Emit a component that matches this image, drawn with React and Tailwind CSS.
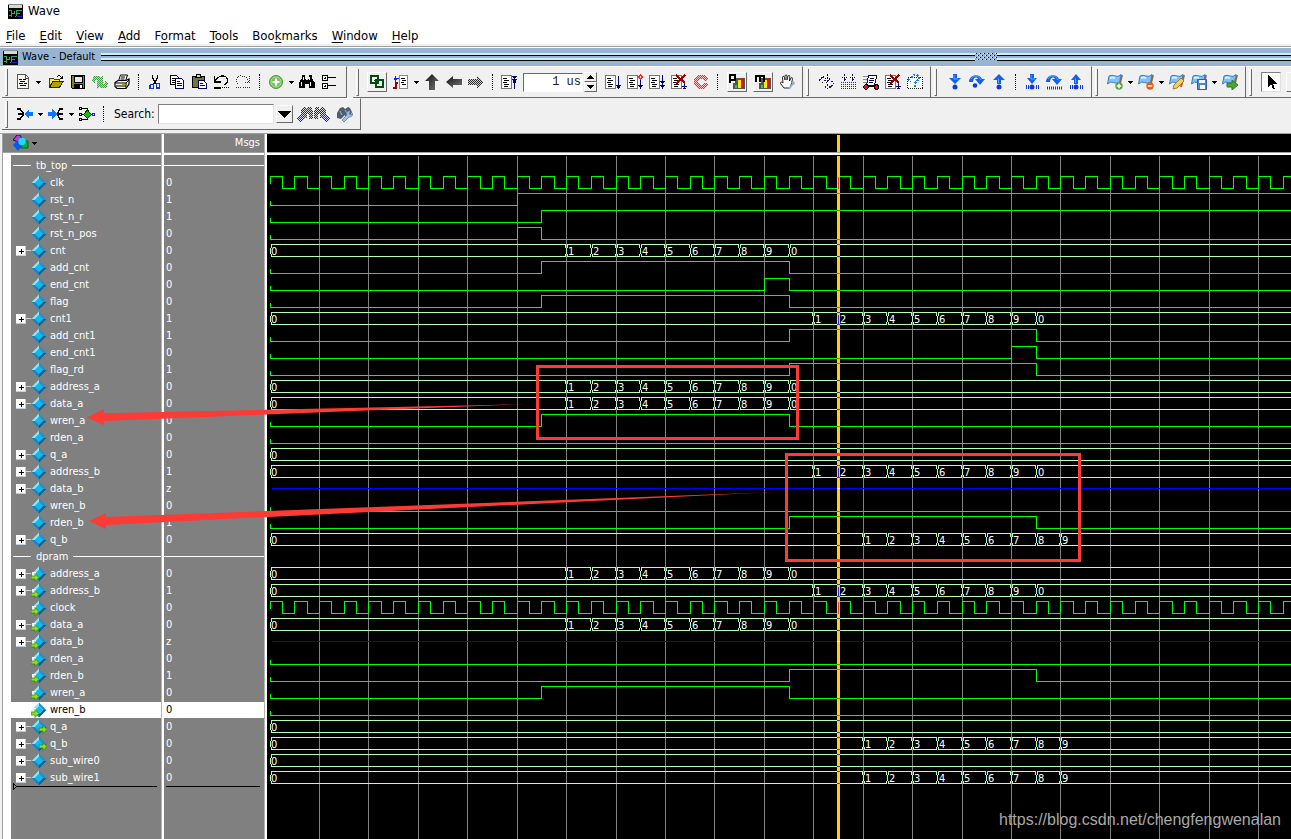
import React from "react";

const UI = "font-['DejaVu_Sans_Condensed','Noto_Sans',sans-serif]";

/* ---------- signal data ---------- */

const range = (from, labels) => [[0, "0"], ...labels.map((l, i) => [from + i, l])];
const UP = ["1", "2", "3", "4", "5", "6", "7", "8", "9"];
const WRITE = range(12, [...UP, "0"]);
const READ = range(22, [...UP, "0"]);
const OUT = range(24, UP);
const ZERO = [[0, "0"]];

const SIGNALS = [
  { name: "tb_top", kind: "group" },
  { name: "clk", value: "0", kind: "clock" },
  { name: "rst_n", value: "1", kind: "bit", edges: [10] },
  { name: "rst_n_r", value: "1", kind: "bit", edges: [11] },
  { name: "rst_n_pos", value: "0", kind: "bit", edges: [10, 11] },
  { name: "cnt", value: "0", kind: "bus", data: WRITE },
  { name: "add_cnt", value: "0", kind: "bit", edges: [11, 21] },
  { name: "end_cnt", value: "0", kind: "bit", edges: [20, 21] },
  { name: "flag", value: "0", kind: "bit", edges: [11, 21] },
  { name: "cnt1", value: "1", kind: "bus", data: READ },
  { name: "add_cnt1", value: "1", kind: "bit", edges: [21, 31] },
  { name: "end_cnt1", value: "0", kind: "bit", edges: [30, 31] },
  { name: "flag_rd", value: "1", kind: "bit", edges: [21, 31] },
  { name: "address_a", value: "0", kind: "bus", data: WRITE },
  { name: "data_a", value: "0", kind: "bus", data: WRITE },
  { name: "wren_a", value: "0", kind: "bit", edges: [11, 21] },
  { name: "rden_a", value: "0", kind: "bit", edges: [] },
  { name: "q_a", value: "0", kind: "bus", data: ZERO },
  { name: "address_b", value: "1", kind: "bus", data: READ },
  { name: "data_b", value: "z", kind: "hiz" },
  { name: "wren_b", value: "0", kind: "bit", edges: [] },
  { name: "rden_b", value: "1", kind: "bit", edges: [21, 31] },
  { name: "q_b", value: "0", kind: "bus", data: OUT },
  { name: "dpram", kind: "group" },
  { name: "address_a", value: "0", kind: "bus", data: WRITE, port: "in" },
  { name: "address_b", value: "1", kind: "bus", data: READ, port: "in" },
  { name: "clock", value: "0", kind: "clock", port: "in" },
  { name: "data_a", value: "0", kind: "bus", data: WRITE, port: "in" },
  { name: "data_b", value: "z", kind: "hiz", port: "in" },
  { name: "rden_a", value: "0", kind: "bit", edges: [], port: "in" },
  { name: "rden_b", value: "1", kind: "bit", edges: [21, 31], port: "in" },
  { name: "wren_a", value: "0", kind: "bit", edges: [11, 21], port: "in" },
  { name: "wren_b", value: "0", kind: "bit", edges: [], port: "in", selected: true },
  { name: "q_a", value: "0", kind: "bus", data: ZERO, port: "out" },
  { name: "q_b", value: "0", kind: "bus", data: OUT, port: "out" },
  { name: "sub_wire0", value: "0", kind: "bus", data: ZERO },
  { name: "sub_wire1", value: "0", kind: "bus", data: OUT },
];

/* ---------- wave chart ---------- */

const ROW = 17;
const TOP = 2;
const END = 4000;
const xAt = (k) => 3 + Math.floor(24.715 * k);

function bitPath(edges, y) {
  const hi = y + 2;
  const lo = y + 14;
  let d = `M3 ${y + 9}V${lo}`;
  edges.forEach((k, i) => {
    d += `H${xAt(k)}V${i % 2 === 0 ? hi : lo}`;
  });
  return d + `H${END}`;
}

function clockPath(y) {
  let d = `M3 ${y + 9}V${y + 2}`;
  for (let k = 0; k < 160; k++) {
    d += `H${xAt(k + 0.5)}V${y + 14}H${xAt(k + 1)}V${y + 2}`;
  }
  return d;
}

function busPath(data, y) {
  const a = y + 2;
  const b = y + 14;
  return data
    .map(([k], i) => {
      const x0 = xAt(k);
      const last = i === data.length - 1;
      const x1 = last ? END : xAt(data[i + 1][0]);
      return (
        `M${x1 - 1} ${a}H${x0 + 1}v3M${x0} ${a + 3}V${b - 3}M${x0 + 1} ${b - 3}v3H${x1 - 1}` +
        (last ? "" : `v-3M${x1 - 1} ${a}v3`)
      );
    })
    .join("");
}

function Waves() {
  const cx = 571;
  return (
    <svg className="absolute inset-0 h-full w-full" role="img" aria-label="Waveforms">
      <g transform="translate(0.5 0.5)" fill="none" shapeRendering="crispEdges">
        {Array.from({ length: 60 }, (_, i) => (
          <line key={i} x1={xAt(2 * i + 2)} x2={xAt(2 * i + 2)} y1="0" y2="3000" stroke="#808080" />
        ))}
        {SIGNALS.map((s, i) => {
          const y = TOP + i * ROW;
          if (s.kind === "bit") return <path key={i} d={bitPath(s.edges, y)} stroke="#00ff00" />;
          if (s.kind === "clock") return <path key={i} d={clockPath(y)} stroke="#00ff00" />;
          if (s.kind === "bus") return <path key={i} d={busPath(s.data, y)} stroke="#b4ffb4" />;
          if (s.kind === "hiz") return <path key={i} d={`M4 ${y + 8}H${END}`} stroke="#0000ff" />;
          return null;
        })}
      </g>
      <rect x="570" y="1" width="3" height="3000" fill="#ffd200" shapeRendering="crispEdges" />
      <g transform="translate(0 0.5)" strokeWidth="1" shapeRendering="crispEdges">
        {SIGNALS.map((s, i) => {
          const y = TOP + i * ROW;
          if (s.kind === "bit") {
            const high = s.edges.filter((k) => k <= 23).length % 2 === 1;
            return <path key={i} d={`M570 ${y + (high ? 2 : 14)}h3`} stroke="#ff3c14" />;
          }
          if (s.kind === "clock") return <path key={i} d={`M${cx + 0.5} ${y + 2}v12`} stroke="#ff3c14" />;
          if (s.kind === "bus")
            return (
              <path
                key={i}
                d={`M570 ${y + 2}h3M570 ${y + 14}h3` + (s.data === READ ? `M${cx + 0.5} ${y + 4}v9` : "")}
                stroke="#4b2dc8"
              />
            );
          if (s.kind === "hiz") return <path key={i} d={`M570 ${y + 8}h3`} stroke="#fff" />;
          return null;
        })}
      </g>
      <g className={`${UI} text-[11px]`} fill="#fff">
        {SIGNALS.map((s, i) =>
          s.kind === "bus"
            ? s.data.map(([k, label], j) => (
                <text key={`${i}-${j}`} x={xAt(k) + (k === 0 ? 1 : 2)} y={TOP + i * ROW + 13}>
                  {label}
                </text>
              ))
            : null
        )}
      </g>
    </svg>
  );
}

/* ---------- icons ---------- */

function Svg({ children, w = 16, h = 16, crisp = true }) {
  return (
    <svg
      width={w}
      height={h}
      viewBox={`0 0 ${w} ${h}`}
      fill="none"
      className="block shrink-0"
      shapeRendering={crisp ? "crispEdges" : "auto"}
      aria-hidden="true"
    >
      {children}
    </svg>
  );
}

function Patterns() {
  const colors = { k: "#303030", g: "#3f9a3f", r: "#ff2a1a", b: "#1a1aff", n: "#10106a" };
  return (
    <svg width="0" height="0" className="absolute" aria-hidden="true">
      <defs>
        {Object.entries(colors).map(([id, c]) => (
          <pattern key={id} id={`dots-${id}`} width="2" height="2" patternUnits="userSpaceOnUse">
            <path d="M0 0h1v1h-1zM1 1h1v1h-1z" fill={c} />
          </pattern>
        ))}
      </defs>
    </svg>
  );
}

const WaveLogo = () => (
  <Svg w={15} h={15}>
    <path d="M0 0h15v15H0z" fill="#000" />
    <path d="M1 1h13v3H1z" fill="#d8d8d8" />
    <path d="M0 .5h15" stroke="#888" />
    <path d="M1 6.500h2.500v3M3.500 12.500v-3h3v-3M1 11.500h1.500M6.500 12.500h1M8.500 12v-5.500h5M8.500 9.500h3" stroke="#1fae62" />
    <path d="M9 12.500h5" stroke="#2a18d8" />
  </Svg>
);

const DocNew = () => (
  <Svg>
    <path d="M2.500 .5h8l3 3v11h-11z" fill="#f4f4f0" stroke="#555" />
    <path d="M10.500 1v3h3" stroke="#555" />
    <path d="M4 5.500h3M8 5.500h3M5 7.500h5M4 9.500h4M9 9.500h3M5 11.500h6" stroke="#000" />
  </Svg>
);
const Open = () => (
  <Svg>
    <path d="M1 4h4l1 1h5v3H5l-4 5z" fill="#ffe84a" stroke="#4a4000" />
    <path d="M1.500 13.500l3.500-6h10l-3.500 6z" fill="#b0a000" stroke="#222" />
    <path d="M9 2.500q3-2 5 2M11.500 4.500h3V1.500" stroke="#000" />
  </Svg>
);
const Save = () => (
  <Svg>
    <path d="M1.500 1.500h13v13h-12l-1-1z" fill="#8a8300" stroke="#000" />
    <path d="M4 2h8v6H4z" fill="#e8e8e0" stroke="#000" />
    <path d="M4 10h9v5H4z" fill="#000" />
    <path d="M10 11h2v3h-2z" fill="#fff" />
  </Svg>
);
const REFRESH = "M0 7c0-5 5-7 9-4l2-2v7H4l2-2C4 5 2 6 3 9zM16 9c0 5-5 7-9 4l-2 2V8h7l-2 2c2 1 4 0 3-3z";
const Refresh = () => (
  <Svg>
    <path d={REFRESH} fill="#b4e2b4" />
    <path d={REFRESH} fill="url(#dots-g)" />
  </Svg>
);
const Print = () => (
  <Svg crisp={false}>
    <path d="M4.500 7l2-6h7l-2 6z" fill="#fff" stroke="#000" />
    <path d="M7 3h4M6.500 5h4" stroke="#000" />
    <path d="M1 8.500l3-2h8l3-1.500v5l-3 4.500H3l-2-2z" fill="#f0f0f0" stroke="#000" strokeWidth="1.200" />
    <path d="M1 9h11l3-3M2 12h10M12 9v5" stroke="#000" />
    <path d="M8 10.500h3" stroke="#b5a800" />
  </Svg>
);
const Cut = () => (
  <Svg>
    <path d="M5.500 1v3l4 6M10.500 1v3l-4 6" stroke="#000" strokeWidth="1.300" />
    <path d="M4 10.500h2.500v4H3v-3zM9.500 9.500h3v4.500h-3z" stroke="#1030d8" strokeWidth="1.200" />
  </Svg>
);
const Copy = () => (
  <Svg>
    <path d="M1.500 1.500h6l2 2v7h-8z" fill="#fff" stroke="#000" />
    <path d="M3 4.500h3M3 6.500h4M3 8.500h4" stroke="#000" />
    <path d="M6.500 4.500h6l2 2v8h-8z" fill="#fff" stroke="#000070" />
    <path d="M8 7.500h3M8 9.500h5M8 11.500h5" stroke="#000070" />
  </Svg>
);
const Paste = () => (
  <Svg>
    <path d="M1.500 2.500h12v11h-12z" fill="#77743a" stroke="#000" />
    <path d="M4.500 3.500h6v-1h-1v-2h-4v2h-1z" fill="#e6d860" stroke="#000" />
    <path d="M7.500 6.500h5l3 3v5h-8z" fill="#fff" stroke="#000070" />
    <path d="M9 9.500h3M9 11.500h5" stroke="#000070" />
  </Svg>
);
const Undo = () => (
  <Svg>
    <path d="M1.500 2v6h6M2 7.500C5 1 13 0 14.500 5.500c.5 2-1 4-3 5" stroke="#000" strokeWidth="1.200" />
    <path d="M1 13h7v2H1z" fill="#000" />
    <path d="M9 13.500h7" stroke="#000" strokeDasharray="1 1" />
  </Svg>
);
const Redo = () => (
  <Svg>
    <path d="M14.500 2v6h-6M14 7.500C11 1 3 0 1.500 5.500c-.5 2 1 4 3 5" stroke="#333" strokeDasharray="1 1" />
    <path d="M8 13.500h8M1 13.500h6" stroke="#333" strokeDasharray="1 1" />
  </Svg>
);
const AddGreen = () => (
  <Svg crisp={false}>
    <circle cx="8" cy="8" r="6.500" fill="#74c35a" stroke="#4c9440" />
    <circle cx="8" cy="8" r="5" stroke="#a7dc92" />
    <path d="M8 4.500v7M4.500 8h7" stroke="#fff" strokeWidth="2.200" />
  </Svg>
);
const BINO = "M3 4V1h3v3l1 2h2l1-2V1h3v3l3 5v5h-6v-4H6v4H0V9z";
const Find = () => (
  <Svg>
    <path d={BINO} fill="#000" />
    <path d="M2.500 8v4M11.500 8v4M4.500 3v3M10.500 3v3" stroke="#fff" />
  </Svg>
);
const Tree = () => (
  <Svg>
    <path d="M1.500 1.500h5v5h-5zM1.500 9.500h5v5h-5z" fill="#fff" stroke="#000" />
    <path d="M3 4.500h2M4 3v2M3 12.500h2M4 11v2M7 3.500h8M7 11.500h8" stroke="#000" />
  </Svg>
);
const Link = () => (
  <Svg>
    <path d="M2 2h7v7H2zM7 6h7v7H7z" stroke="#004c12" strokeWidth="2" />
    <path d="M6 6l4 4" stroke="#004c12" strokeWidth="2" />
  </Svg>
);
const WaveDoc = () => (
  <Svg>
    <path d="M6.500 1.500h8v13h-8z" fill="#fff" stroke="#888" />
    <path d="M8 4.500h4M9 6.500h4M8 8.500h3M9 10.500h4" stroke="#000" />
    <path d="M2.500 10V4.500h3M1 6l1.500-3L4 6" stroke="#1020ff" />
    <path d="M0 14h3V9h2" stroke="#9a0000" strokeWidth="2" />
  </Svg>
);
const Steel = () => (
  <defs>
    <linearGradient id="steel" x1="0" y1="0" x2="1" y2="1">
      <stop offset="0" stopColor="#111" />
      <stop offset="1" stopColor="#777" />
    </linearGradient>
  </defs>
);
const ArrowUp = () => (
  <Svg crisp={false}>
    <Steel />
    <path d="M8 0l7 7h-4v9H5V7H1z" fill="url(#steel)" />
  </Svg>
);
const ArrowLeft = () => (
  <Svg crisp={false}>
    <path d="M0 8l7-6v3h9v6H7v3z" fill="url(#steel)" />
  </Svg>
);
const ArrowRightDim = () => (
  <Svg>
    <path d="M16 8L9 2v3H0v6h9v3z" fill="#ccc" />
    <path d="M16 8L9 2v3H0v6h9v3z" fill="url(#dots-k)" />
  </Svg>
);
const ListDoc = ({ children }) => (
  <Svg>
    <path d="M.5 1.500h10v13H.5z" fill="#fff" stroke="#777" />
    <path d="M2 4.500h4M3 6.500h5M2 8.500h4M3 10.500h5M3 12.500h4" stroke="#000" />
    {children}
  </Svg>
);
const Restart = () => (
  <ListDoc>
    <path d="M13.500 15V4M11 5.500h5M12 3.500h3M11 2.500h5M12 8.500l1.500-3 1.500 3" stroke="#00007a" />
  </ListDoc>
);
const Run = () => (
  <ListDoc>
    <path d="M13.500 2v12M11 11.500h5M12 13.500h3" stroke="#00007a" />
    <path d="M11 11h5l-2.500 4z" fill="#00007a" />
  </ListDoc>
);
const RunCont = () => (
  <ListDoc>
    <path d="M13.500 1l2 2-2 2-2-2z" stroke="#f22" />
    <path d="M13.500 6v6" stroke="#00007a" />
    <path d="M11 11h5l-2.500 4z" fill="#00007a" />
  </ListDoc>
);
const RunAll = () => (
  <ListDoc>
    <path d="M13.500 1v12" stroke="#00007a" />
    <path d="M11 7h5l-2.500 3zM11 11h5l-2.500 4z" fill="#00007a" />
  </ListDoc>
);
const RunBreak = () => (
  <ListDoc>
    <path d="M13.500 8v7M11 12.500h5M12 14.500h3" stroke="#00007a" />
    <path d="M5 1l9 8M14 1l-9 9" stroke="#900" strokeWidth="2" />
  </ListDoc>
);
const STOP = "M5 1h6l4 4-1 2h-3l-2-2H7L5 7v2l2 2h2l2-2h3l1 2-4 4H5l-4-4V5z";
const Stop = () => (
  <Svg>
    <path d={STOP} fill="#f8c0bc" />
    <path d={STOP} fill="url(#dots-r)" />
  </Svg>
);
const Stats = ({ letter }) => (
  <Svg>
    <path d="M6 4h10v11H4V9h2z" fill="#555" />
    <path d="M6 11h2v3H6z" fill="#00e03a" />
    <path d="M9 6h3v8H9z" fill="#ffe600" />
    <path d="M12 4h3v10h-3z" fill="#e01010" />
    {letter === "P" ? (
      <path d="M1 9V1h5v5H2" stroke="#000" strokeWidth="2" />
    ) : (
      <path d="M1 8V2h8v6M5 2v6" stroke="#000" strokeWidth="2" />
    )}
  </Svg>
);
const Hand = () => (
  <Svg crisp={false}>
    <path d="M5 14L1.500 9.500C1 8 2.500 7.500 4 9L3.500 3.500c0-1.500 1.500-1.500 2 0L6 6V2c0-1.500 2-1.500 2 0v4l1-4c.5-1 2-.7 1.800.5L10.500 7l1.500-3c1-.8 2 0 1.500 1.200L12 11l-1 3z" fill="#fff" stroke="#222" />
    <path d="M9 14l4-4-1-2 3-1 1 3-2 1-3 4z" fill="#8fb0dc" />
  </Svg>
);
const EditWave = () => (
  <Svg>
    <path d="M0 6.500l4-4 2 3M3 9l3-3 3 5M10 5l5 4-4 5-3-3M6 12l2 3 4-3" stroke="#222" strokeDasharray="2 1" />
    <path d="M8.500 0v6M6 4l2.500 3L11 4M4 2l3 3" stroke="#00007a" strokeDasharray="2 1" />
  </Svg>
);
const WaveGrid = () => (
  <Svg>
    <path d="M0 8.500h16M0 10.500h16M0 12.500h16M0 14.500h16" stroke="#333" strokeDasharray="1 1" />
    <path d="M3.500 0v5M11.500 0v5M1 3l2.500 3L6 3M9 3l2.500 3L14 3" stroke="#10107a" strokeDasharray="2 1" />
  </Svg>
);
const Query = () => (
  <Svg>
    <path d="M.5 3.500h15v11H.5z" stroke="#222" strokeDasharray="1 1" fill="#f8f8f8" />
    <path d="M5 4c0-4 7-4 7 0 0 2-4 3-4 6M8 11v2M1 5l3 2" stroke="#1a7ad8" strokeWidth="2" strokeDasharray="2 1" />
  </Svg>
);
const Step = () => (
  <Svg>
    <path d="M0 2.500h6M0 5.500h5M0 8.500h4" stroke="#88a" />
    <path d="M5.500 1.500h8v2l-2 8h-8z" fill="#fff" stroke="#111" />
    <path d="M7 4.500h4M6 6.500h5M6 8.500h4" stroke="#00007a" />
    <path d="M2 11l12 2" stroke="#000" strokeWidth="2" />
    <circle cx="3" cy="13" r="2.200" fill="#e01030" stroke="#000" />
    <circle cx="13.500" cy="13" r="2.200" fill="#e01030" stroke="#000" />
  </Svg>
);
const blue = "#1560f0";
const Base = () => <path d="M2.500 11v4M4.500 11v4M12.500 11v4M14.500 11v4" stroke="#1038e0" />;
const StepIn = ({ base }) => (
  <Svg crisp={false}>
    <path d={base ? "M6 0h4v4h3l-5 6-5-6h3z" : "M6 0h4v4h4l-6 6-6-6h4z"} fill={blue} />
    <path d="M7 1v4h4" stroke="#58a6ff" />
    <circle cx="8" cy="13" r="2.500" fill="#1038e0" />
    {base && <Base />}
  </Svg>
);
const StepOver = ({ base }) => (
  <Svg crisp={false}>
    <path d="M0 8C0 0 11-1 13 5h3l-5 6-5-6h3C7 2 4 4 4 8z" fill={blue} />
    <path d="M2 5c2-4 8-4 10 1" stroke="#4aa4ff" />
    {base ? (
      <path d="M1 14h15" stroke="#1038e0" strokeWidth="3" strokeDasharray="1 1" />
    ) : (
      <circle cx="6" cy="11.500" r="2.300" fill="#1038e0" />
    )}
  </Svg>
);
const StepOut = ({ base }) => (
  <Svg crisp={false}>
    <path d={base ? "M6 10h4V6h3L8 0 3 6h3z" : "M6 10h4V6h4L8 0 2 6h4z"} fill={blue} />
    <path d="M7.500 9V4.500" stroke="#58a6ff" />
    <circle cx="8" cy="13" r="2.500" fill="#1038e0" />
    {base && <Base />}
  </Svg>
);
const Flag = ({ kind }) => (
  <Svg crisp={false}>
    <path d="M15 1L12 13" stroke="#a8682a" strokeWidth="2" />
    <path d="M2 2q3-1.500 6 0t6-1.500l-1.500 8q-3 1.500-6 0T.5 10z" fill="#7cc2f4" stroke="#3a7cc0" />
    <path d="M3 4q2.500-1 5 0" stroke="#d8f0ff" strokeWidth="2" />
    {kind === "add" && (
      <>
        <circle cx="12" cy="12" r="3.700" fill="#5aa63e" />
        <path d="M12 9.800v4.400M9.800 12h4.400" stroke="#fff" strokeWidth="1.500" />
      </>
    )}
    {kind === "del" && (
      <>
        <circle cx="12" cy="12" r="3.700" fill="#ea5a14" />
        <path d="M9.800 12h4.400" stroke="#fff" strokeWidth="1.500" />
      </>
    )}
    {kind === "edit" && <path d="M4 15l1-4 7-7 3 3-7 7z" fill="#f3cd72" stroke="#b07820" />}
    {kind === "save" && (
      <>
        <path d="M6.500 5.500h9v10h-9z" fill="#4f86d0" stroke="#2f5fa8" />
        <path d="M8 6h6v3H8zM9 11h5v4H9z" fill="#f2f6ff" />
      </>
    )}
    {kind === "go" && <path d="M5 9h5V6l6 5-6 5v-3H5z" fill="#4fa53c" stroke="#2d7a22" />}
  </Svg>
);
const Pointer = () => (
  <Svg>
    <path d="M5 1v12l3-3 2 5h2l-2-5h4z" fill="#000" />
  </Svg>
);
const Merge = ({ out }) => (
  <Svg>
    {out ? (
      <>
        <path d="M0 6h4V3l5 5-5 5v-3H0z" fill="#0a78ff" />
        <path d="M15 3h-3l-2 3.500v3l2 3.500h3M9 8h6" stroke="#000" strokeWidth="1.600" />
      </>
    ) : (
      <>
        <path d="M16 6h-4V3L7 8l5 5v-3h4z" fill="#0a78ff" />
        <path d="M0 3h3l3 3.500v3L3 13H0M1 8h6" stroke="#000" strokeWidth="1.600" />
      </>
    )}
  </Svg>
);
const Net = () => (
  <Svg>
    <path d="M3 2.500h5v11H3M1 8.500h13" stroke="#000" />
    <path d="M.5 1.500h2v2h-2zM.5 7.500h2v2h-2zM.5 12.500h2v2h-2z" fill="#fff" stroke="#000" />
    <path d="M8.500 4l4 4.500-4 4-4-4z" fill="#18b818" stroke="#043a04" />
    <path d="M13.500 7.500h2v2h-2z" fill="#fff" stroke="#1020ff" />
  </Svg>
);
const FindDim = ({ flip }) => (
  <Svg>
    <g transform={flip ? "matrix(-1 0 0 1 16 0)" : undefined}>
      <path d="M4 9V5l2-4h3l1 3 1-3h3l2 4v8h-4V8h-2v4H4z" fill="#d8d8d8" />
      <path d="M4 9V5l2-4h3l1 3 1-3h3l2 4v8h-4V8h-2v4H4z" fill="url(#dots-k)" />
      <path d="M0 12l3-3h2l3 3-3 4H2z" fill="#d8d8ff" />
      <path d="M0 12l3-3h2l3 3-3 4H2z" fill="url(#dots-b)" />
    </g>
  </Svg>
);
const FindTools = () => (
  <Svg crisp={false}>
    <path d="M0 7l3-5 3-1 2 2 3-2 2 1 2 4-2 5H8V9l-4 4-4-1z" fill="#4e5e70" />
    <path d="M3 5l2 4M8 4l2 3" stroke="#a9bacb" />
    <path d="M5 14l5-5c-1-3 1-4 3-4l-1 3 2 1 2-2c0 3-2 4-4 4l-5 5z" fill="#9ec4ee" stroke="#6f90b8" />
  </Svg>
);
const ColorMenu = () => (
  <Svg w={17} h={16} crisp={false}>
    <path d="M1 5l4-5h3l2 4-4 3z" fill="#b53ae0" stroke="#201040" />
    <path d="M9 6h7v7H9z" fill="#18a838" stroke="#063" />
    <path d="M6 5l5 5-5 6-5-6z" fill="#0a58e8" />
    <circle cx="10" cy="6.500" r="3.700" fill="#18dcff" />
  </Svg>
);
const Gem = ({ port }) => (
  <Svg w={16} h={16} crisp={false}>
    <path d="M8 .5L.5 8H4l4-4z" fill="#8fe4f4" />
    <path d="M8 .5L15.500 8H12L8 4z" fill="#1f93cf" />
    <path d="M.5 8L8 15.500V12L4 8z" fill="#1585c4" />
    <path d="M15.500 8L8 15.500V12l4-4z" fill="#07618f" />
    <path d="M8 4l4 4-4 4-4-4z" fill="#08bdf6" />
    {port === "in" && (
      <>
        <path d="M1 6h4v4H1z" fill="#e9f4f4" />
        <path d="M0 10h4V7.500l4 4-4 4V13H0z" fill="#8ae01c" stroke="#3b7a08" strokeWidth=".7" />
      </>
    )}
    {port === "out" && (
      <path d="M8 9h4V6.500l4 4-4 4V12H8z" fill="#8ae01c" stroke="#3b7a08" strokeWidth=".7" />
    )}
  </Svg>
);

/* ---------- toolbar parts ---------- */

const Btn = ({ label, children }) => (
  <button type="button" aria-label={label} className="flex h-[22px] w-[22px] shrink-0 items-center justify-center">
    {children}
  </button>
);
const Framed = ({ label, pressed, children }) => (
  <button
    type="button"
    aria-label={label}
    className={
      pressed
        ? "flex h-5 w-5 shrink-0 items-center justify-center border border-t-[#808080] border-l-[#808080] border-r-[#e0e0e0] border-b-[#e0e0e0] bg-white"
        : "flex h-5 w-5 shrink-0 items-center justify-center border border-t-white border-l-white border-r-[#696969] border-b-[#696969]"
    }
  >
    {children}
  </button>
);
const Drop = ({ label }) => (
  <button type="button" aria-label={label} className="flex h-[22px] w-[9px] shrink-0 items-center justify-center">
    <Svg w={5} h={3}>
      <path d="M0 0h5L2.500 3z" fill="#000" />
    </Svg>
  </button>
);
const Sep = () => (
  <div className="flex w-[11px] shrink-0 justify-center">
    <div className="h-4 border-l border-dotted border-black" />
  </div>
);
const Group = ({ children, className = "" }) => (
  <div
    role="toolbar"
    className={`flex h-8 shrink-0 items-center border-b border-r border-[#696969] border-t border-t-white pl-[3px] ${className}`}
  >
    <div className="h-[27px] w-[3px] shrink-0 border-b border-r border-[#696969] border-l border-l-white" />
    {children}
  </div>
);

const MENUS = [
  ["", "F", "ile"],
  ["", "E", "dit"],
  ["", "V", "iew"],
  ["", "A", "dd"],
  ["F", "o", "rmat"],
  ["", "T", "ools"],
  ["Boo", "k", "marks"],
  ["", "W", "indow"],
  ["", "H", "elp"],
];

function Toolbars() {
  return (
    <div className="overflow-hidden bg-[#f0f0f0] pl-[2px]">
      <div className="flex">
        <Group className="pr-[6px]">
          <div className="w-[4px]" />
          <Btn label="New"><DocNew /></Btn>
          <Drop label="New options" />
          <div className="w-[2px]" />
          <Btn label="Open"><Open /></Btn>
          <Btn label="Save"><Save /></Btn>
          <Btn label="Reload"><Refresh /></Btn>
          <Btn label="Print"><Print /></Btn>
          <Sep />
          <Btn label="Cut"><Cut /></Btn>
          <Btn label="Copy"><Copy /></Btn>
          <Btn label="Paste"><Paste /></Btn>
          <Btn label="Undo"><Undo /></Btn>
          <Btn label="Redo"><Redo /></Btn>
          <Sep />
          <Btn label="Add"><AddGreen /></Btn>
          <Drop label="Add options" />
          <Btn label="Find"><Find /></Btn>
          <Btn label="Expand tree"><Tree /></Btn>
        </Group>
        <div className="w-[6px] shrink-0" />
        <Group className="pr-[4px]">
          <div className="w-[8px]" />
          <Framed label="Link"><Link /></Framed>
          <div className="w-[3px]" />
          <Btn label="Wave list"><WaveDoc /></Btn>
          <Drop label="Wave list options" />
          <Btn label="Up"><ArrowUp /></Btn>
          <Btn label="Back"><ArrowLeft /></Btn>
          <Btn label="Forward"><ArrowRightDim /></Btn>
          <Sep />
          <Btn label="Restart"><Restart /></Btn>
          <div className="w-[3px]" />
          <input
            aria-label="Run length"
            defaultValue="1 us"
            className="h-[19px] w-[60px] shrink-0 border border-t-[#696969] border-l-[#696969] border-r-white border-b-white bg-white px-px text-right font-['Liberation_Mono',monospace] text-[12px] text-[#202020]"
          />
          <div className="ml-px flex flex-col">
            <button type="button" aria-label="Increase" className="flex h-[10px] w-[13px] items-center justify-center border border-t-white border-l-white border-r-[#696969] border-b-[#696969]">
              <Svg w={7} h={4}><path d="M0 4h7L3.500 0z" fill="#000" /></Svg>
            </button>
            <button type="button" aria-label="Decrease" className="flex h-[10px] w-[13px] items-center justify-center border border-t-white border-l-white border-r-[#696969] border-b-[#696969]">
              <Svg w={7} h={4}><path d="M0 0h7L3.500 4z" fill="#000" /></Svg>
            </button>
          </div>
          <div className="w-[5px]" />
          <Btn label="Run"><Run /></Btn>
          <Btn label="Continue run"><RunCont /></Btn>
          <Btn label="Run all"><RunAll /></Btn>
          <Btn label="Break"><RunBreak /></Btn>
          <Btn label="Stop"><Stop /></Btn>
          <Sep />
          <div className="w-[4px]" />
          <Framed label="Performance profile"><Stats letter="P" /></Framed>
          <div className="w-[6px]" />
          <Framed label="Memory profile"><Stats letter="M" /></Framed>
          <div className="w-[3px]" />
          <Btn label="Pan"><Hand /></Btn>
        </Group>
        <Group className="pr-[4px]">
          <div className="w-[7px]" />
          <Btn label="Edit wave"><EditWave /></Btn>
          <Btn label="Wave grid"><WaveGrid /></Btn>
          <Btn label="Step source"><Step /></Btn>
          <Btn label="Clear"><RunBreak /></Btn>
          <Btn label="Query"><Query /></Btn>
        </Group>
        <Group className="pr-[4px]">
          <div className="w-[7px]" />
          <Btn label="Step into"><StepIn /></Btn>
          <Btn label="Step over"><StepOver /></Btn>
          <Btn label="Step out"><StepOut /></Btn>
          <Sep />
          <Btn label="Step into instance"><StepIn base /></Btn>
          <Btn label="Step over instance"><StepOver base /></Btn>
          <Btn label="Step out instance"><StepOut base /></Btn>
        </Group>
        <Group className="pr-[4px]">
          <div className="w-[6px]" />
          <Btn label="Add bookmark"><Flag kind="add" /></Btn>
          <Drop label="Add bookmark options" />
          <Btn label="Delete bookmark"><Flag kind="del" /></Btn>
          <Drop label="Delete bookmark options" />
          <Btn label="Edit bookmark"><Flag kind="edit" /></Btn>
          <Btn label="Save bookmarks"><Flag kind="save" /></Btn>
          <Drop label="Save bookmarks options" />
          <Btn label="Go to bookmark"><Flag kind="go" /></Btn>
        </Group>
        <Group className="pr-[5px]">
          <div className="w-[9px]" />
          <Framed label="Select mode" pressed><Pointer /></Framed>
          <div className="w-[5px]" />
          <Framed label="Zoom mode" />
        </Group>
      </div>
      <div className="flex">
        <Group className="pr-[4px]">
          <div className="w-[6px]" />
          <Btn label="Drivers"><Merge /></Btn>
          <Drop label="Drivers options" />
          <Btn label="Readers"><Merge out /></Btn>
          <Drop label="Readers options" />
          <Btn label="Net"><Net /></Btn>
          <Sep />
          <label htmlFor="search" className="ml-[5px] text-[12px] leading-4">Search:</label>
          <input
            id="search"
            className="ml-[3px] h-5 w-[116px] shrink-0 border border-t-[#808080] border-l-[#808080] border-r-[#e3e3e3] border-b-[#e3e3e3] bg-white px-1 text-[12px]"
          />
          <button type="button" aria-label="Search history" className="ml-[2px] flex h-[18px] w-[17px] shrink-0 items-center justify-center border border-t-white border-l-white border-r-[#696969] border-b-[#696969]">
            <Svg w={13} h={7}><path d="M0 0h13L6.500 7z" fill="#000" /></Svg>
          </button>
          <button type="button" aria-label="Find previous" className="ml-1 flex h-[22px] w-4 shrink-0 items-center"><FindDim /></button>
          <button type="button" aria-label="Find next" className="ml-px flex h-[22px] w-4 shrink-0 items-center"><FindDim flip /></button>
          <div className="w-[4px]" />
          <Btn label="Search options"><FindTools /></Btn>
        </Group>
      </div>
    </div>
  );
}

/* ---------- signal columns ---------- */

const NameRow = ({ s }) => {
  if (s.kind === "group")
    return (
      <li className="flex h-[17px] items-center gap-[5px] pl-[2px]">
        <span className="mb-px w-[18px] border-t border-white" />
        <span>{s.name}</span>
        <span className="mb-px grow border-t border-white" />
      </li>
    );
  return (
    <li
      className={
        s.selected
          ? "flex h-[17px] items-center border-t border-[#808080] bg-white bg-clip-padding pl-[5px] text-black"
          : "flex h-[17px] items-center pl-[5px]"
      }
    >
      {s.kind === "bus" || s.kind === "hiz" ? (
        <>
          <button type="button" aria-label={`Expand ${s.name}`} className="mt-px shrink-0">
            <Svg w={10} h={10}>
              <path d="M0 0h10v10H0z" fill="#fff" />
              <path d="M9.500 0v10M0 9.500h10" stroke="#c4cce0" />
              <path d="M3 5.500h5M5.500 3v5" stroke="#000" />
            </Svg>
          </button>
          <span className="w-[5px] border-t border-[#d0d0d0]" />
        </>
      ) : (
        <span className="w-[15px]" />
      )}
      <Gem port={s.port} />
      <span className="pl-[3px]">{s.name}</span>
    </li>
  );
};

const ValueRow = ({ s }) => (
  <li
    className={
      s.selected
        ? "flex h-[17px] items-center border-t border-[#808080] bg-white bg-clip-padding pl-[2px] text-black"
        : s.kind === "group"
          ? "flex h-[17px] items-center"
          : "flex h-[17px] items-center pl-[2px]"
    }
  >
    {s.kind === "group" ? <span className="mb-px grow border-t border-white" /> : s.value}
  </li>
);

const Divider = () => <div className="w-[3px] shrink-0 border-l border-[#b4b4b4] bg-white" />;

function Rails({ className }) {
  return (
    <div className={`flex grow flex-col gap-[2px] ${className}`}>
      <div className="h-[3px] border-t-2 border-[#c8f0fa] bg-black" />
      <div className="h-[3px] border-t-2 border-[#c8f0fa] bg-black" />
    </div>
  );
}

export default function App() {
  return (
    <div className={`${UI} flex min-h-screen flex-col bg-white text-[11px] leading-4 text-black`}>
      <Patterns />
      <header className="flex h-[22px] items-center gap-[5px] pl-2 text-[13px]">
        <WaveLogo />
        <h1>Wave</h1>
      </header>
      <nav className="flex h-[22px] items-center gap-[14px] pt-[5px] pl-[6px] text-[13px]">
        {MENUS.map(([a, b, c]) => (
          <button key={a + b + c} type="button">
            {a}
            <span className="underline underline-offset-2">{b}</span>
            {c}
          </button>
        ))}
      </nav>
      <div className="h-[3px] border-b border-[#a0a0a0] bg-[#f0f0f0]" />
      <div className="flex h-[19px] items-center border-t border-white bg-[#99b4d1] pl-[3px]">
        <WaveLogo />
        <h2 className="pl-[4px] pr-[6px] text-[11px]">Wave - Default</h2>
        <div className="flex grow items-center">
          <Rails className="basis-[874px]" />
          <Svg w={22} h={8}>
            <path d="M1 .5h21M1 4.500h21" stroke="#10103a" strokeDasharray="1 3" />
            <path d="M3 2.500h19M3 6.500h19" stroke="#10103a" strokeDasharray="1 3" />
            <path d="M0 .5h21M0 4.500h21" stroke="#e8f8ff" strokeDasharray="1 3" />
            <path d="M2 2.500h19M2 6.500h19" stroke="#e8f8ff" strokeDasharray="1 3" />
          </Svg>
          <Rails className="basis-[294px]" />
        </div>
      </div>
      <Toolbars />
      <div className="h-1 border-b border-[#a0a0a0] bg-[#f0f0f0]" />

      <main className="relative flex grow overflow-hidden text-white">
        <div className="w-[3px] shrink-0 border-r border-[#a0a0a0] bg-[#f0f0f0]" />
        <section className="flex w-[158px] shrink-0 flex-col" aria-label="Signals">
          <div className="flex h-[18px] items-center bg-[#808080] pl-[9px]">
            <ColorMenu />
            <button type="button" aria-label="Display options" className="ml-[3px]">
              <Svg w={5} h={3}><path d="M0 0h5L2.500 3z" fill="#000" /></Svg>
            </button>
          </div>
          <div className="h-[3px] border-t border-[#a0a0a0] bg-white" />
          <div className="ml-2 grow bg-[#808080] pt-[2px]">
            <ul>{SIGNALS.map((s, i) => <NameRow key={i} s={s} />)}</ul>
            <div className="flex h-px items-center pr-1 pl-[2px]">
              <Svg w={4} h={7}><path d="M.5 .5v6l3-3z" stroke="#000" /></Svg>
              <div className="grow border-t border-black" />
            </div>
          </div>
        </section>
        <Divider />
        <section className="flex w-[100px] shrink-0 flex-col" aria-label="Values">
          <div className="flex h-[18px] items-center justify-end bg-[#808080] pr-[4px]">Msgs</div>
          <div className="h-[3px] border-t border-[#a0a0a0] bg-white" />
          <div className="grow bg-[#808080] pt-[2px]">
            <ul>{SIGNALS.map((s, i) => <ValueRow key={i} s={s} />)}</ul>
            <div className="mr-1 ml-[2px] border-t border-black" />
          </div>
        </section>
        <Divider />
        <section className="flex min-w-0 grow flex-col bg-black" aria-label="Waves">
          <div className="flex h-[18px] items-end pl-[570px]">
            <div className="h-[17px] w-[3px] bg-[#ffd200]" />
          </div>
          <div className="h-[3px] border-t border-[#a0a0a0] bg-white" />
          <div className="relative grow">
            <Waves />
          </div>
        </section>

        <svg className="pointer-events-none absolute inset-0 h-full w-full" aria-hidden="true">
          <g transform="translate(0 -134)">
            <rect x="537.500" y="366.500" width="260" height="72" fill="none" stroke="#fc3a36" strokeWidth="3" />
            <rect x="786.500" y="454.500" width="293" height="106" fill="none" stroke="#fc3a36" strokeWidth="3" />
            <path d="M87 417.500L104 409v4.300L528 404 104 421v4z" fill="#fc3a36" />
            <path d="M89 521L106 513v4L775 492 106 525v4z" fill="#fc3a36" />
          </g>
        </svg>
        <p className="absolute right-[10px] bottom-[9px] font-['Liberation_Sans',Arial,sans-serif] text-[16px] leading-5 text-[#a8a8a8]">
          https://blog.csdn.net/chengfengwenalan
        </p>
      </main>
    </div>
  );
}
